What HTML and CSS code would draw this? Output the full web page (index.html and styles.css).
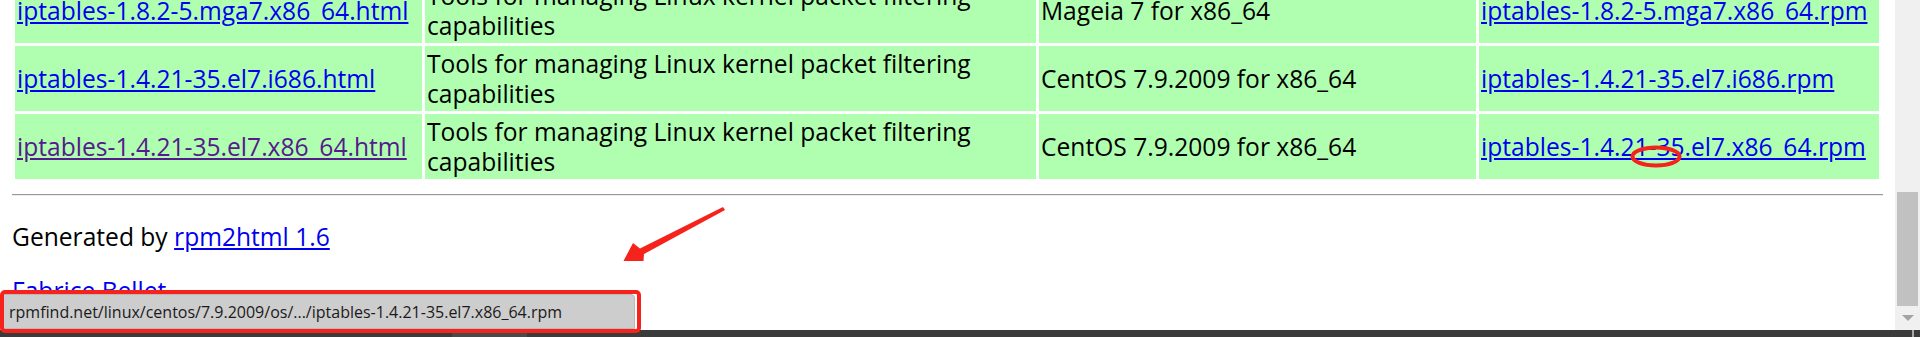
FILE: index.html
```html
<!DOCTYPE html>
<html lang="en">
<head>
<meta charset="utf-8">
<title>iptables RPM</title>
<link rel="stylesheet" href="styles.css">
</head>
<body>
<div class="window">
  <div class="viewport">
    <div class="page">
      <table class="pkgs">
        <colgroup>
          <col class="c1"><col class="c2"><col class="c3"><col class="c4">
        </colgroup>
        <tr>
          <td><a class="link" href="#">iptables-1.8.2-5.mga7.x86_64.html</a></td>
          <td>Tools for managing Linux kernel packet filtering capabilities</td>
          <td>Mageia 7 for x86_64</td>
          <td><a class="link" href="#">iptables-1.8.2-5.mga7.x86_64.rpm</a></td>
        </tr>
        <tr>
          <td><a class="link" href="#">iptables-1.4.21-35.el7.i686.html</a></td>
          <td>Tools for managing Linux kernel packet filtering capabilities</td>
          <td>CentOS 7.9.2009 for x86_64</td>
          <td><a class="link" href="#">iptables-1.4.21-35.el7.i686.rpm</a></td>
        </tr>
        <tr>
          <td><a class="link visited" href="#">iptables-1.4.21-35.el7.x86_64.html</a></td>
          <td>Tools for managing Linux kernel packet filtering capabilities</td>
          <td>CentOS 7.9.2009 for x86_64</td>
          <td><a class="link" href="#">iptables-1.4.21-35.el7.x86_64.rpm</a></td>
        </tr>
      </table>
      <hr class="rule">
      <p class="gen">Generated by <a class="link" href="#">rpm2html 1.6</a></p>
      <p class="author"><a class="link" href="#">Fabrice Bellet</a></p>
    </div>
    <div class="scrollbar">
      <div class="thumb"></div>
      <div class="arrow-down"></div>
    </div>
  </div>
  <div class="taskbar">
    <div class="tb-seg"></div>
    <div class="tb-line"></div>
  </div>

  <div class="status">rpmfind.net/linux/centos/7.9.2009/os/.../iptables-1.4.21-35.el7.x86_64.rpm</div>
  <div class="mark-box"></div>
  <svg class="marks" width="1920" height="337" viewBox="0 0 1920 337">
    <polygon points="723,207 725,210 644,254 643.5,261 623.5,261 633,243 640,248.5" fill="#f5231b"/>
    <ellipse cx="1656" cy="156.5" rx="23.5" ry="9" fill="none" stroke="#f5231b" stroke-width="4"/>
  </svg>
</div>
</body>
</html>
```

FILE: styles.css
```css
html, body {
  margin: 0;
  padding: 0;
  width: 1920px;
  height: 337px;
  overflow: hidden;
  background: #ffffff;
}

body {
  font-family: "Open Sans", "Noto Sans", sans-serif;
  color: #000;
}

.window {
  position: relative;
  width: 1920px;
  height: 337px;
  display: flex;
  flex-direction: column;
}

.viewport {
  height: 330px;
  display: flex;
  overflow: hidden;
}

.page {
  flex: 1;
  padding: 0 12px;
  overflow: hidden;
  font-size: 24.6px;
  line-height: 30px;
}

.pkgs {
  table-layout: fixed;
  width: 1870px;
  border-spacing: 3px;
  margin-top: -25px;
}

.c1 { width: 407px; }
.c2 { width: 611px; }
.c3 { width: 437px; }
.c4 { width: 400px; }

.pkgs td {
  background: #b0ffb0;
  padding: 2.5px 2px;
  vertical-align: middle;
}

.link {
  color: #0000ee;
  text-decoration: underline;
}

.link.visited {
  color: #551a8b;
}

.rule {
  margin: 12px 0 0;
  height: 0;
  border: 0;
  border-top: 1px solid #9a9a9a;
  border-bottom: 1px solid #ececec;
}

.gen {
  margin: 26px 0 0;
}

.author {
  margin: 24px 0 0;
}

.scrollbar {
  width: 25px;
  background: #f0f0f0;
  display: flex;
  flex-direction: column;
  align-items: flex-start;
}

.thumb {
  margin: 192px 0 0 2px;
  width: 21px;
  height: 114px;
  background: #c1c1c1;
}

.arrow-down {
  margin: 9px 0 0 7px;
  width: 0;
  height: 0;
  border-left: 6px solid transparent;
  border-right: 6px solid transparent;
  border-top: 6px solid #a3a3a3;
}

.taskbar {
  height: 7px;
  background: #3b3b3b;
  display: flex;
}

.tb-seg {
  margin-left: 452px;
  width: 75px;
  background: #4a4a4a;
}

.tb-line {
  margin-left: auto;
  margin-right: 6px;
  width: 2px;
  background: #a8a8a8;
}

.status {
  position: absolute;
  left: 3px;
  top: 294px;
  width: 632px;
  height: 35px;
  box-sizing: border-box;
  padding: 4px 0 0 5px;
  background: #cdcdcd;
  border: 1px solid #b9b9b9;
  border-radius: 0 4px 0 0;
  font-size: 16px;
  line-height: 26px;
  color: #1a1a1a;
  white-space: nowrap;
}

.mark-box {
  position: absolute;
  left: 0;
  top: 290px;
  width: 641px;
  height: 43px;
  box-sizing: border-box;
  border: 4px solid #f5231b;
  border-radius: 5px;
}

.marks {
  position: absolute;
  left: 0;
  top: 0;
  pointer-events: none;
}
```
